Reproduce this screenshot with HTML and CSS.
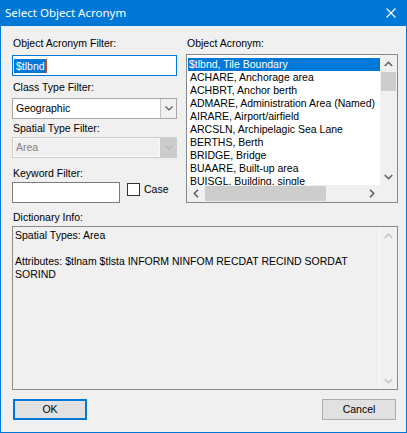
FILE: index.html
```html
<!DOCTYPE html>
<html>
<head>
<meta charset="utf-8">
<link rel="stylesheet" href="styles.css">
</head>
<body>
<div class="window">
  <div class="titlebar">
    <span class="title">Select Object Acronym</span>
    <svg class="close" width="10" height="10" viewBox="0 0 10 10"><path d="M0.5 0.5 L9.5 9.5 M9.5 0.5 L0.5 9.5" stroke="#fff" stroke-width="1.1" fill="none"/></svg>
  </div>
  <div class="content">
    <div class="top">
      <div class="left">
        <div class="label">Object Acronym Filter:</div>
        <div class="edit focused"><span class="sel">$tlbnd</span><span class="caret"></span></div>
        <div class="label l2">Class Type Filter:</div>
        <div class="combo">
          <span class="combo-text">Geographic</span>
          <span class="combo-btn"><svg width="8" height="5" viewBox="0 0 8 5"><polyline points="0.5,0.5 4,4 7.5,0.5" fill="none" stroke="#555" stroke-width="1.1"/></svg></span>
        </div>
        <div class="label l3">Spatial Type Filter:</div>
        <div class="combo disabled">
          <span class="combo-text">Area</span>
          <span class="combo-btn"><svg width="8" height="5" viewBox="0 0 8 5"><polyline points="0.5,0.5 4,4 7.5,0.5" fill="none" stroke="#b5b5b5" stroke-width="1.1"/></svg></span>
        </div>
        <div class="label l4">Keyword Filter:</div>
        <div class="kwrow">
          <div class="edit kw"></div>
          <div class="check"><span class="box"></span><span>Case</span></div>
        </div>
      </div>
      <div class="right">
        <div class="label">Object Acronym:</div>
        <div class="listbox">
          <div class="items">
            <div class="item selected">$tlbnd, Tile Boundary</div>
            <div class="item">ACHARE, Anchorage area</div>
            <div class="item">ACHBRT, Anchor berth</div>
            <div class="item">ADMARE, Administration Area (Named)</div>
            <div class="item">AIRARE, Airport/airfield</div>
            <div class="item">ARCSLN, Archipelagic Sea Lane</div>
            <div class="item">BERTHS, Berth</div>
            <div class="item">BRIDGE, Bridge</div>
            <div class="item">BUAARE, Built-up area</div>
            <div class="item">BUISGL, Building, single</div>
          </div>
          <div class="vscroll">
            <span class="sbtn"><svg width="9" height="6" viewBox="0 0 9 6"><polyline points="0.8,5 4.5,1.3 8.2,5" fill="none" stroke="#606060" stroke-width="1.6"/></svg></span>
            <span class="vthumb"></span>
            <span class="vtrack"></span>
            <span class="sbtn"><svg width="9" height="6" viewBox="0 0 9 6"><polyline points="0.8,1 4.5,4.7 8.2,1" fill="none" stroke="#606060" stroke-width="1.6"/></svg></span>
          </div>
          <div class="hscroll">
            <span class="sbtn"><svg width="6" height="9" viewBox="0 0 6 9"><polyline points="5,0.8 1.3,4.5 5,8.2" fill="none" stroke="#606060" stroke-width="1.6"/></svg></span>
            <span class="hthumb"></span>
            <span class="htrack"></span>
            <span class="sbtn"><svg width="6" height="9" viewBox="0 0 6 9"><polyline points="1,0.8 4.7,4.5 1,8.2" fill="none" stroke="#606060" stroke-width="1.6"/></svg></span>
          </div>
          <div class="corner"></div>
        </div>
      </div>
    </div>
    <div class="label dl">Dictionary Info:</div>
    <div class="dict">
      <div class="dict-text">Spatial Types: Area<br><br>Attributes: $tlnam $tlsta INFORM NINFOM RECDAT RECIND SORDAT SORIND</div>
      <div class="dscroll">
        <span class="sbtn"><svg width="9" height="6" viewBox="0 0 9 6"><polyline points="0.8,5 4.5,1.3 8.2,5" fill="none" stroke="#c2c2c2" stroke-width="1.6"/></svg></span>
        <span class="vtrack"></span>
        <span class="sbtn"><svg width="9" height="6" viewBox="0 0 9 6"><polyline points="0.8,1 4.5,4.7 8.2,1" fill="none" stroke="#c2c2c2" stroke-width="1.6"/></svg></span>
      </div>
    </div>
    <div class="buttons">
      <button class="btn ok">OK</button>
      <button class="btn">Cancel</button>
    </div>
  </div>
</div>
</body>
</html>
```
FILE: styles.css
```css
* { box-sizing: border-box; }
html, body { margin: 0; padding: 0; background: #f0f0f0; }
body {
  font-family: "Liberation Sans", Arial, sans-serif;
  font-size: 10.5px;
  line-height: 13px;
  color: #000;
}
.window {
  width: 407px;
  height: 433px;
  border: 1px solid #0078d7;
  border-top: none;
  background: #f0f0f0;
  display: flex;
  flex-direction: column;
  overflow: hidden;
}
.titlebar {
  height: 26px;
  flex: none;
  background: #0078d7;
  display: flex;
  align-items: center;
  justify-content: space-between;
  padding: 0 10px 0 4px;
}
.title {
  color: #fff;
  font-family: "Noto Sans", "Open Sans", sans-serif;
  font-size: 11.5px;
  line-height: 16px;
  margin-top: -1px;
}
.close { display: block; margin-top: -1px; }
.content {
  flex: 1;
  display: flex;
  flex-direction: column;
  padding: 11px 8px 0 11px;
}
.top {
  display: grid;
  grid-template-columns: 165px 212px;
  column-gap: 9px;
}
.left, .right { display: flex; flex-direction: column; }
.label { height: 13px; padding-left: 1px; white-space: nowrap; }
.l2 { margin-top: 5px; }
.l3 { margin-top: 3px; }
.l4 { margin-top: 9px; }
.dl { margin-top: 8px; }

.edit {
  height: 21px;
  border: 1px solid #7a7a7a;
  background: #fff;
  display: flex;
  align-items: center;
  padding-left: 1px;
}
.edit.focused { margin-top: 5px; border-color: #0078d7; }
.sel {
  background: #0078d7;
  color: #fff;
  padding: 0 1px 0 2px;
  height: 14px;
  line-height: 14px;
}
.caret { width: 1px; height: 14px; background: #c8581a; }

.combo {
  height: 21px;
  margin-top: 4px;
  border: 1px solid #a6a6a6;
  background: #fff;
  display: flex;
}
.combo-text { flex: 1; padding: 3px 0 0 3px; }
.combo-btn {
  width: 16px;
  border-left: 1px solid #c4c4c4;
  background: #f0f0f0;
  display: flex;
  align-items: center;
  justify-content: center;
}
.combo.disabled {
  margin-top: 2px;
  border-color: #cccccc;
  background: #f0f0f0;
  color: #838383;
}
.combo.disabled .combo-text { border: 1px solid #fafafa; padding: 2px 0 0 2px; }
.combo.disabled .combo-btn { background: #cccccc; border-left-color: #cccccc; }

.kwrow { margin-top: 2px; display: flex; align-items: flex-start; }
.edit.kw { width: 108px; height: 21px; }
.check { display: flex; align-items: center; margin-left: 7px; margin-top: 1px; height: 13px; }
.box {
  width: 13px; height: 13px;
  border: 1px solid #333;
  background: #fff;
  margin-right: 4px;
}

.listbox {
  margin-top: 4px;
  height: 149px;
  border: 1px solid #828790;
  background: #fff;
  display: grid;
  grid-template-columns: 1fr 17px;
  grid-template-rows: 1fr 17px;
  overflow: hidden;
}
.items { padding: 3px 0 0 1px; overflow: hidden; }
.item { height: 13px; line-height: 13px; padding-left: 2px; white-space: nowrap; }
.item.selected { background: #0078d7; color: #fff; padding-left: 1px; }

.vscroll, .dscroll {
  background: #f0f0f0;
  display: flex;
  flex-direction: column;
}
.sbtn {
  flex: none;
  width: 17px; height: 17px;
  display: flex; align-items: center; justify-content: center;
}
.vthumb { height: 19px; background: #cdcdcd; margin: 0 1px; }
.vtrack, .htrack { flex: 1; }
.hscroll { background: #f0f0f0; display: flex; }
.hthumb { width: 121px; background: #cdcdcd; margin: 1px 0 1px 1px; }
.corner { background: #f0f0f0; }

.dict {
  margin-top: 2px;
  height: 164px;
  border: 1px solid #8a8a8a;
  background: #f0f0f0;
  display: flex;
}
.dict-text { flex: 1; padding: 2px 4px 0 2px; }
.dscroll { width: 18px; border-left: 1px solid #fbfbfb; }

.buttons {
  margin-top: 9px;
  display: flex;
  justify-content: space-between;
  padding: 0 2px 0 1px;
}
.btn {
  width: 74px;
  height: 21px;
  background: #e1e1e1;
  border: 1px solid #adadad;
  font-family: "Liberation Sans", Arial, sans-serif;
  font-size: 10.5px;
  line-height: 13px;
  color: #000;
  padding: 0;
}
.btn.ok { border: 2px solid #0078d7; }
```
